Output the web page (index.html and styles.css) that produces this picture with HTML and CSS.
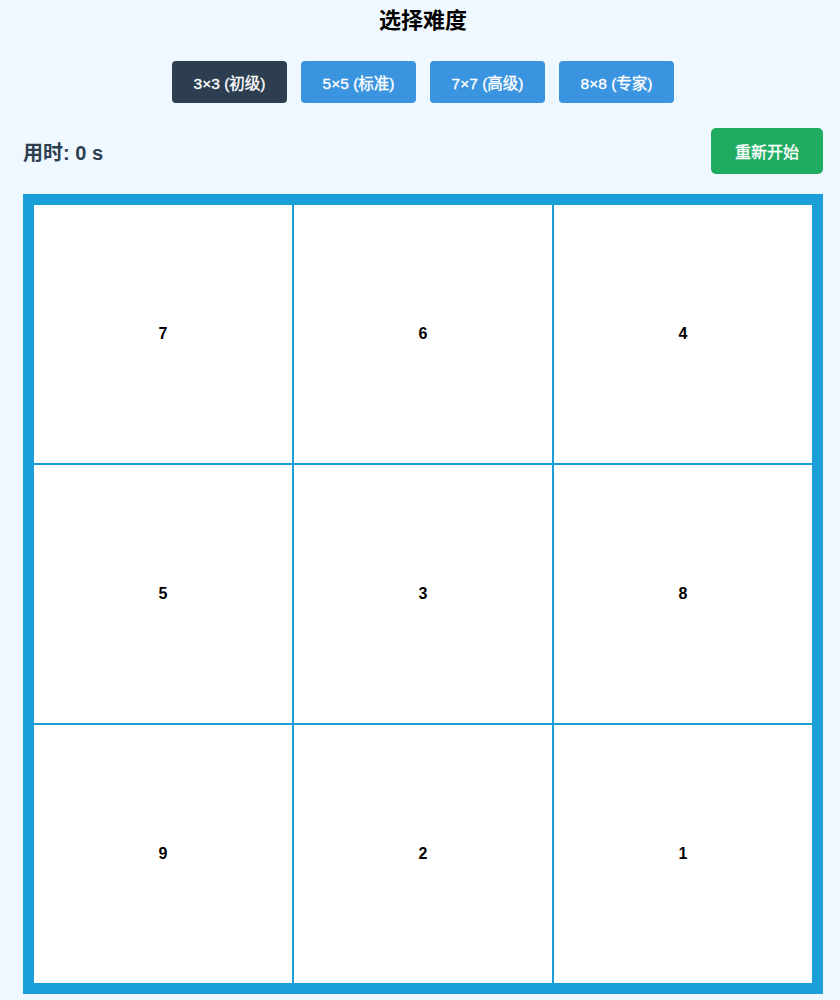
FILE: index.html
```html
<!DOCTYPE html>
<html lang="zh">
<head>
<meta charset="utf-8">
<title>数字拼图</title>
<link rel="stylesheet" href="styles.css">
</head>
<body>
<div class="container">
  <h2 class="title">选择难度</h2>
  <div class="levels">
    <button class="level active">3×3 (初级)</button>
    <button class="level">5×5 (标准)</button>
    <button class="level">7×7 (高级)</button>
    <button class="level">8×8 (专家)</button>
  </div>
  <div class="status">
    <div class="timer">用时: 0 s</div>
    <button class="restart">重新开始</button>
  </div>
  <div class="board">
    <div class="cell">7</div>
    <div class="cell">6</div>
    <div class="cell">4</div>
    <div class="cell">5</div>
    <div class="cell">3</div>
    <div class="cell">8</div>
    <div class="cell">9</div>
    <div class="cell">2</div>
    <div class="cell">1</div>
  </div>
</div>
</body>
</html>
```
FILE: styles.css
```css
html, body {
  margin: 0;
  padding: 0;
  background: #f0f8ff;
  font-family: "Liberation Sans", "Noto Sans CJK SC", sans-serif;
}
.container {
  width: 800px;
  margin-left: 23px;
}
.title {
  margin: 0;
  padding-top: 7px;
  font-size: 22px;
  line-height: 28px;
  font-weight: bold;
  text-align: center;
  color: #000;
}
.levels {
  margin-top: 26px;
  display: flex;
  justify-content: center;
  gap: 14px;
}
.level {
  width: 115px;
  height: 42px;
  border: none;
  border-radius: 4px;
  background: #3a94df;
  color: #fff;
  font-family: "Liberation Sans", "Noto Sans CJK SC", sans-serif;
  font-size: 15.5px;
  font-weight: normal;
  padding: 0;
  -webkit-text-stroke: 0.35px #fff;
}
.level.active {
  background: #2c3e50;
}
.status {
  margin-top: 25px;
  display: flex;
  justify-content: space-between;
  align-items: center;
}
.timer {
  font-size: 20px;
  font-weight: bold;
  color: #2c3e50;
  padding-top: 1px;
}
.restart {
  width: 112px;
  height: 46px;
  border: none;
  border-radius: 5px;
  background: #1fab60;
  color: #fff;
  font-family: "Liberation Sans", "Noto Sans CJK SC", sans-serif;
  font-size: 16px;
  font-weight: normal;
  padding: 0;
  -webkit-text-stroke: 0.35px #fff;
}
.board {
  margin-top: 20px;
  width: 800px;
  height: 800px;
  box-sizing: border-box;
  padding: 10px;
  background: #1a9fd9;
  display: grid;
  grid-template-columns: repeat(3, 1fr);
  grid-template-rows: repeat(3, 1fr);
}
.cell {
  background: #fff;
  border: 1px solid #1a9fd9;
  display: flex;
  align-items: center;
  justify-content: center;
  font-size: 16px;
  font-weight: bold;
  color: #000;
}
```
